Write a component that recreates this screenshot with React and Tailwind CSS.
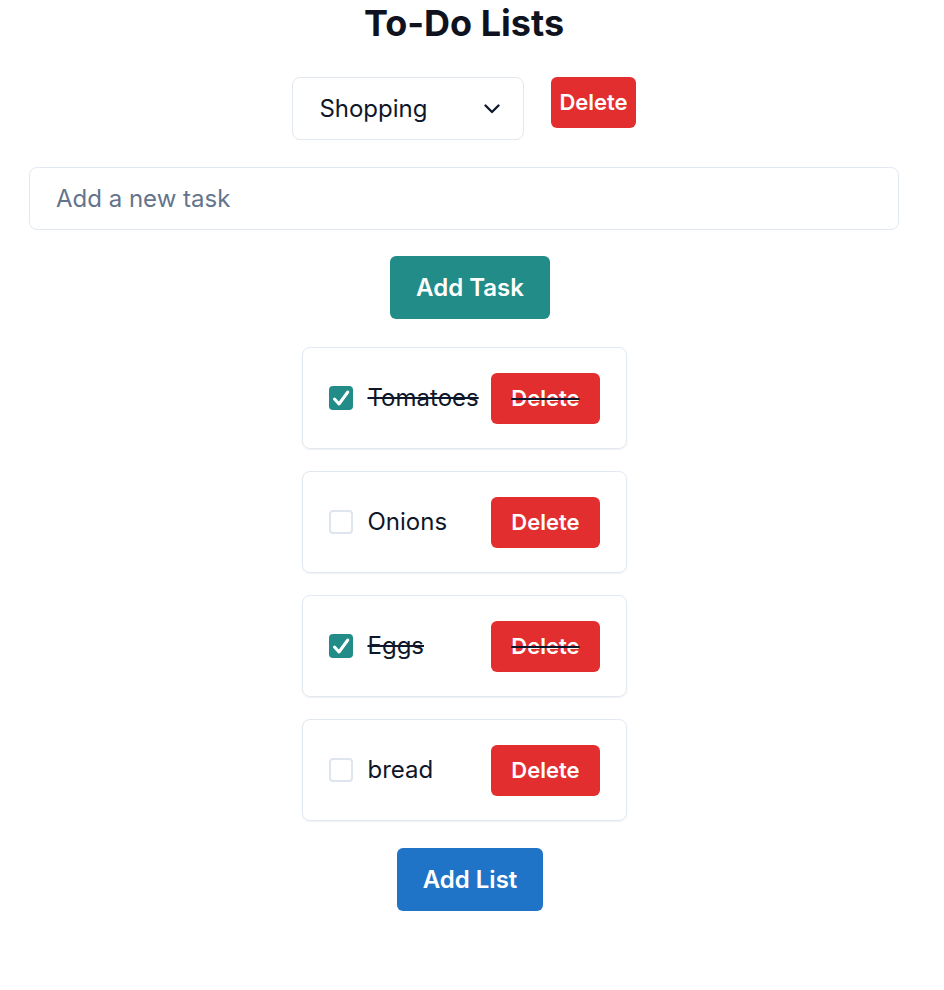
import React, { useState } from "react";

const initialTasks = [
  { id: 1, text: "Tomatoes", done: true },
  { id: 2, text: "Onions", done: false },
  { id: 3, text: "Eggs", done: true },
  { id: 4, text: "bread", done: false },
];

function Checkbox({ checked, onChange }) {
  return (
    <button
      onClick={onChange}
      className={`w-[24px] h-[24px] shrink-0 rounded-[4px] flex items-center justify-center ${
        checked ? "bg-[#218c88]" : "border-2 border-[#dfe5ee] bg-white"
      }`}
    >
      {checked && (
        <svg width="24" height="24" viewBox="0 0 24 24" fill="none">
          <path
            d="M5.5 13l4.5 5L18.8 6"
            stroke="white"
            strokeWidth="3"
            strokeLinecap="round"
            strokeLinejoin="round"
          />
        </svg>
      )}
    </button>
  );
}

export default function App() {
  const [tasks, setTasks] = useState(initialTasks);

  const toggle = (id) =>
    setTasks(tasks.map((t) => (t.id === id ? { ...t, done: !t.done } : t)));
  const remove = (id) => setTasks(tasks.filter((t) => t.id !== id));

  return (
    <div
      className="w-[928px] min-h-[990px] bg-white text-[#0f172a] flex flex-col items-center"
      style={{ fontFamily: "Inter, 'Noto Sans', sans-serif" }}
    >
      <h1 className="mt-[3px] text-[36px] leading-[40px] font-bold text-[#0f1320]">
        To-Do Lists
      </h1>

      {/* List selector */}
      <div className="mt-[34px] flex items-start gap-[27px]">
        <div className="w-[232px] h-[63px] border border-[#e2e8f0] rounded-[8px] flex items-center justify-between pl-[26px] pr-[23px]">
          <span className="text-[24px] text-[#0f172a]">Shopping</span>
          <svg width="16" height="10" viewBox="0 0 16 10" fill="none">
            <path
              d="M1.5 1.5L8 8l6.5-6.5"
              stroke="#0f172a"
              strokeWidth="2.3"
              strokeLinecap="round"
              strokeLinejoin="round"
            />
          </svg>
        </div>
        <button className="h-[51px] px-[8px] rounded-[6px] bg-[#e22e2f] text-white text-[22px] font-semibold">
          Delete
        </button>
      </div>

      {/* New task */}
      <div className="mt-[27px] w-full px-[29px]">
        <input
          placeholder="Add a new task"
          className="w-full h-[63px] border border-[#e2e8f0] rounded-[8px] px-[26px] text-[24px] placeholder:text-[#64748b] outline-none"
        />
      </div>

      <button className="mt-[26px] ml-[12px] h-[63px] px-[26px] rounded-[6px] bg-[#218c88] text-white text-[24px] font-semibold">
        Add Task
      </button>

      {/* Tasks */}
      <div className="mt-[28px] flex flex-col gap-[22px]">
        {tasks.map((t) => (
          <div
            key={t.id}
            className={`w-[325px] h-[102px] border border-[#e2e8f0] rounded-[8px] shadow-[0_1px_2px_rgba(15,23,42,0.06)] flex items-center pl-[26px] pr-[26px] ${
              t.done ? "line-through decoration-[#0f172a]" : ""
            }`}
          >
            <Checkbox checked={t.done} onChange={() => toggle(t.id)} />
            <span className="ml-[15px] text-[24px] text-[#0f172a] flex-1">
              {t.text}
            </span>
            <button
              onClick={() => remove(t.id)}
              className="h-[51px] px-[20px] rounded-[6px] bg-[#e22e2f] text-white text-[22px] font-semibold"
            >
              Delete
            </button>
          </div>
        ))}
      </div>

      <button className="mt-[27px] ml-[12px] h-[63px] px-[26px] rounded-[6px] bg-[#2074c8] text-white text-[24px] font-semibold">
        Add List
      </button>
    </div>
  );
}
